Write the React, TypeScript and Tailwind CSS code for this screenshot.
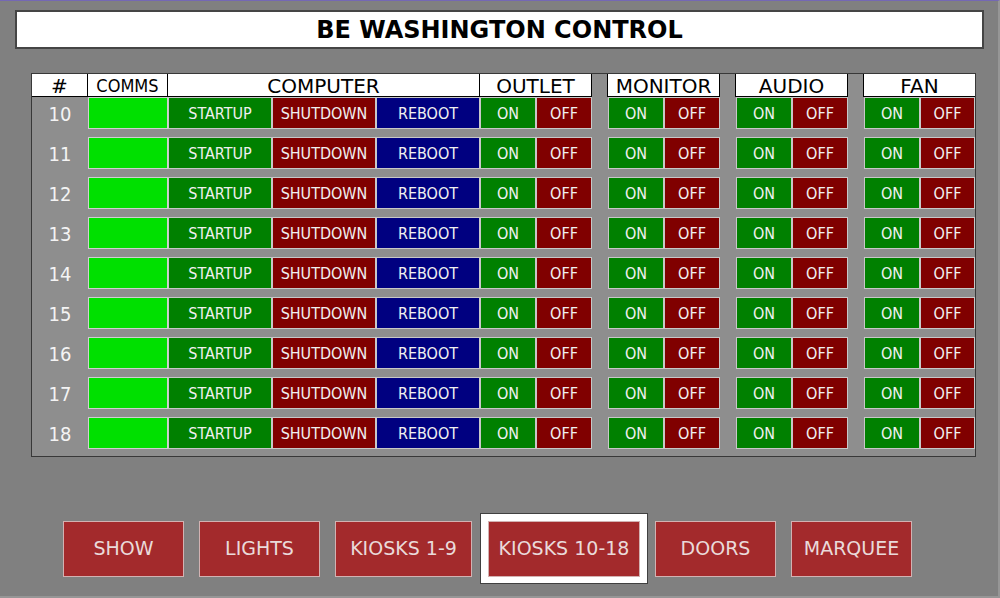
const font = { fontFamily: '"DejaVu Sans Condensed", "DejaVu Sans", Verdana, sans-serif' }
const wide = { fontFamily: '"DejaVu Sans", Verdana, sans-serif' }

const rows = [10, 11, 12, 13, 14, 15, 16, 17, 18]

function Btn({ label, color, w }: { label?: string; color: string; w: string }) {
  return (
    <div className={`${w} ${color} h-[32px] pt-px border border-[#c8c8c8] flex items-center justify-center text-[16px] text-[#f0f0f0] leading-none`}>
      {label}
    </div>
  )
}

function OnOff({ first, last }: { first?: boolean; last?: boolean }) {
  return (
    <div className={`flex ${first ? "" : "ml-[16px]"}`}>
      <Btn label="ON" color="bg-[#008000]" w="w-[56px]" />
      <Btn label="OFF" color="bg-[#800000]" w={last ? "w-[55px]" : "w-[56px]"} />
    </div>
  )
}

function Header({ label, w, extra, small }: { label: string; w: string; extra?: string; small?: boolean }) {
  return (
    <div style={small ? font : wide} className={`${w} ${extra ?? ""} ${small ? "text-[18px]" : "text-[20px]"} h-[23px] pt-px bg-white border-r border-b border-black flex items-center justify-center text-black leading-none`}>
      {label}
    </div>
  )
}

function NavBtn({ label, w }: { label: string; w: string }) {
  return (
    <div style={wide} className={`${w} h-[56px] bg-[#a32a2c] border border-[#d2b2b2] flex items-center justify-center text-[19px] text-[#eadada]`}>
      {label}
    </div>
  )
}

export default function App() {
  return (
    <div style={font} className="w-[1000px] h-[598px] bg-[#808080] border-t border-t-[#7468b4] border-r-2 border-r-[#969696] border-b-2 border-b-[#969696] overflow-hidden">
      <div className="ml-[15px] mt-[9px] w-[969px] h-[39px] bg-white border-2 border-[#454545] flex items-center justify-center">
        <h1 style={wide} className="text-[24px] font-bold text-black leading-none">BE WASHINGTON CONTROL</h1>
      </div>

      <div className="ml-[31px] mt-[24px] w-[945px] h-[384px] bg-[#8e8e8e] border border-[#383838]">
        <div className="flex">
          <Header label="#" w="w-[56px]" />
          <Header label="COMMS" w="w-[80px]" small />
          <Header label="COMPUTER" w="w-[312px]" />
          <Header label="OUTLET" w="w-[112px]" />
          <Header label="MONITOR" w="w-[113px]" extra="ml-[15px] border-l" />
          <Header label="AUDIO" w="w-[113px]" extra="ml-[15px] border-l" />
          <Header label="FAN" w="w-[112px]" extra="ml-[15px] border-l border-r-0" />
        </div>
        <div className="flex flex-col gap-[8px]">
          {rows.map((n) => (
            <div key={n} className="flex">
              <div className="w-[56px] h-[32px] pt-px flex items-center justify-center text-[20px] text-[#f4f4f4] leading-none">{n}</div>
              <div className="w-[80px] h-[32px] bg-[#00e000] border border-[#d0d0d0]" />
              <Btn label="STARTUP" color="bg-[#008000]" w="w-[104px]" />
              <Btn label="SHUTDOWN" color="bg-[#800000]" w="w-[104px]" />
              <Btn label="REBOOT" color="bg-[#000080]" w="w-[104px]" />
              <OnOff first />
              <OnOff />
              <OnOff />
              <OnOff last />
            </div>
          ))}
        </div>
      </div>

      <div className="flex items-center ml-[63px] mt-[56px]">
        <NavBtn label="SHOW" w="w-[121px]" />
        <div className="ml-[15px]"><NavBtn label="LIGHTS" w="w-[121px]" /></div>
        <div className="ml-[15px]"><NavBtn label="KIOSKS 1-9" w="w-[137px]" /></div>
        <div className="ml-[8px] w-[168px] h-[71px] bg-white border border-[#404040] flex items-center justify-center">
          <NavBtn label="KIOSKS 10-18" w="w-[152px]" />
        </div>
        <div className="ml-[7px]"><NavBtn label="DOORS" w="w-[121px]" /></div>
        <div className="ml-[15px]"><NavBtn label="MARQUEE" w="w-[121px]" /></div>
      </div>
    </div>
  )
}
